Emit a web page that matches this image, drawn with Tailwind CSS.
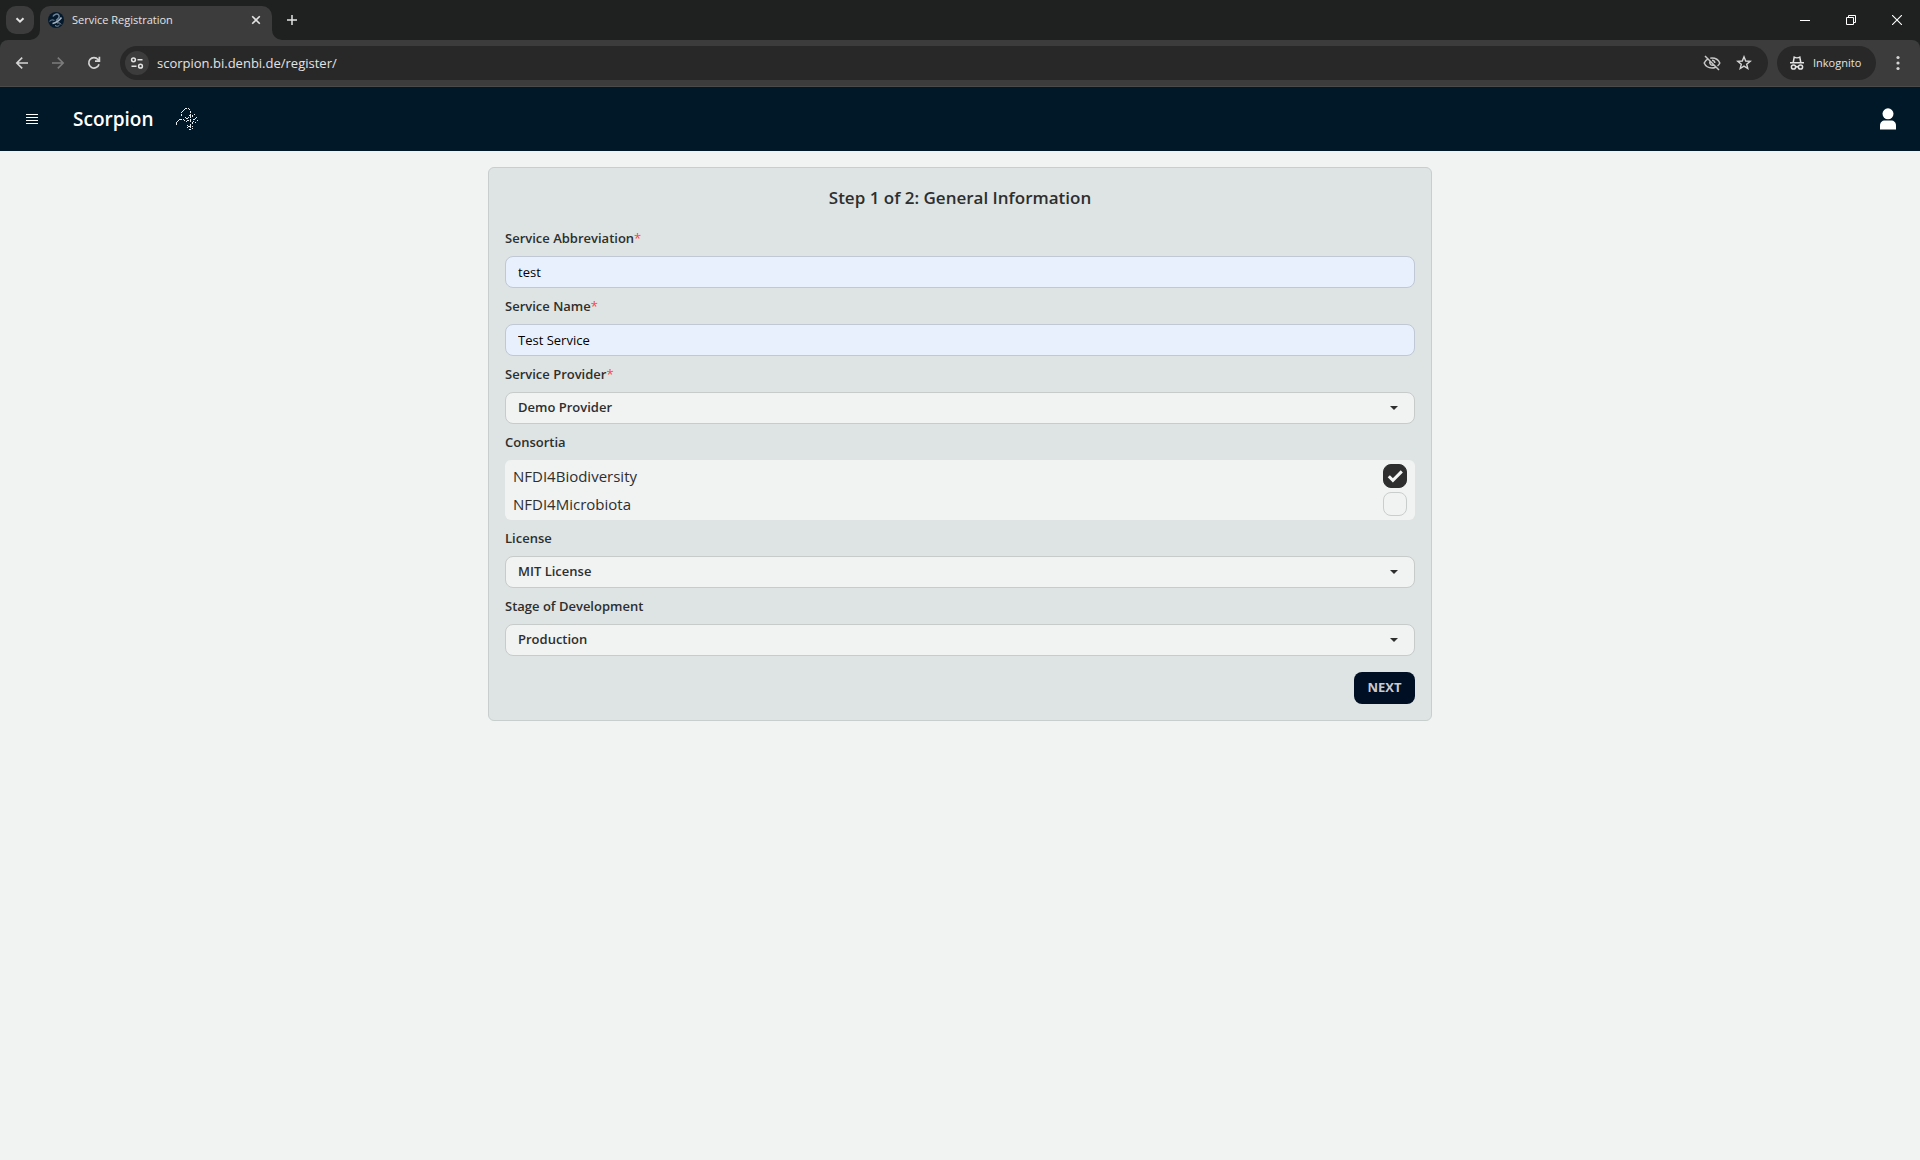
<!DOCTYPE html>
<html lang="en">
<head>
<meta charset="utf-8">
<meta name="viewport" content="width=device-width, initial-scale=1">
<title>Service Registration</title>
<script src="https://cdn.jsdelivr.net/npm/@tailwindcss/browser@4"></script>
</head>
<body class="flex min-h-screen flex-col bg-[#f0f3f2] font-['Open_Sans','Noto_Sans',sans-serif] text-[#2e2e2e]">

<!-- Browser frame -->
<div class="flex flex-col bg-[#1f2120] text-[#e3e3e3]">
  <div class="flex h-10 items-stretch">
    <button aria-label="Search tabs" class="mt-[6px] ml-[6px] flex size-7 items-center justify-center rounded-[10px] bg-[#3c3c3c]">
      <svg class="size-3" viewBox="0 0 12 12" fill="none" stroke="currentColor" stroke-width="2"><path d="M2.500 4.200 6 7.600 9.500 4.200"/></svg>
    </button>
    <div class="relative mt-[6px] ml-[6px] flex w-[232px] items-center rounded-t-[10px] bg-[#3c3c3c] pb-[6px] pl-2 pr-2">
      <svg class="absolute bottom-0 -left-[10px] size-[10px]" viewBox="0 0 10 10" fill="#3c3c3c"><path d="M10 0v10H0A10 10 0 0 0 10 0z"/></svg>
      <svg class="absolute bottom-0 -right-[10px] size-[10px]" viewBox="0 0 10 10" fill="#3c3c3c"><path d="M0 0v10h10A10 10 0 0 1 0 0z"/></svg>
      <svg class="size-4 shrink-0" viewBox="0 0 16 16" fill="none">
        <circle cx="8" cy="8" r="8" fill="#04192b"/>
        <path d="M5 4.500C6 2 9.500 1.200 10.800 3.200c1.200 2-.8 3.800-2.800 5.300" stroke="#6f8599" stroke-width="1.500"/>
        <path d="M1.500 9.500C3 7.500 5 7.500 6.500 8.500" stroke="#5a7188" stroke-width="1.200"/>
        <path d="M4.500 11.500C7.500 11 10.500 9.500 13.500 5.500" stroke="#a5b4c2" stroke-width="1.600"/>
        <path d="M9 11c1.500-.5 3.500 0 4 1.500M7 13.500c1.500 1 3.500 1 4.500-.5" stroke="#8b9dae"/>
      </svg>
      <span class="ml-2 flex-1 text-[11px]">Service Registration</span>
      <button aria-label="Close tab" class="flex size-4 items-center justify-center">
        <svg class="size-[10px]" viewBox="0 0 10 10" stroke="currentColor" stroke-width="1.600"><path d="m1.200 1.200 7.600 7.600M8.800 1.200 1.200 8.800"/></svg>
      </button>
    </div>
    <button aria-label="New tab" class="ml-3 flex w-4 items-center justify-center">
      <svg class="size-3 shrink-0" viewBox="0 0 12 12" stroke="currentColor" stroke-width="1.500"><path d="M6 1v10M1 6h10"/></svg>
    </button>
    <div class="ml-auto flex">
      <button aria-label="Minimize" class="flex w-[46px] items-center justify-center"><svg class="size-[10px]" viewBox="0 0 10 10" stroke="#fff"><path d="M0 5.500h10"/></svg></button>
      <button aria-label="Restore" class="flex w-[46px] items-center justify-center"><svg class="size-[10px]" viewBox="0 0 10 10" fill="none" stroke="#fff"><path d="M.5 2.500h7v7h-7zM2.500 2.500v-2h7v7h-2"/></svg></button>
      <button aria-label="Close" class="flex w-[46px] items-center justify-center"><svg class="size-[10px]" viewBox="0 0 10 10" stroke="#fff" stroke-width="1.100"><path d="m0 0 10 10M10 0 0 10"/></svg></button>
    </div>
  </div>
  <div class="flex h-[47px] items-center rounded-t-lg border-b border-[#4a4a4a] bg-[#3c3c3c] px-3">
    <button aria-label="Back" class="flex size-5 items-center justify-center"><svg class="size-[14px]" viewBox="0 0 14 14" fill="none" stroke="#d5d5d5" stroke-width="1.600"><path d="M13 7H2M7.200 1.600 1.800 7l5.400 5.400"/></svg></button>
    <button aria-label="Forward" disabled class="ml-4 flex size-5 items-center justify-center"><svg class="size-[14px]" viewBox="0 0 14 14" fill="none" stroke="#7c7c7c" stroke-width="1.600"><path d="M1 7h11M6.800 1.600 12.200 7l-5.400 5.400"/></svg></button>
    <button aria-label="Reload" class="ml-4 flex size-5 items-center justify-center"><svg class="size-[14px]" viewBox="0 0 14 14" fill="none" stroke="#d5d5d5" stroke-width="1.700"><path d="M12 8.200A5.200 5.200 0 1 1 11 3.500L12.500 5M12.400.8v4.400H8"/></svg></button>
    <div class="ml-4 flex h-[34px] flex-1 items-center rounded-full bg-[#282828] pr-[14px] pl-[5px]">
      <button aria-label="Site information" class="flex size-6 items-center justify-center rounded-full bg-[#3c3c3c]">
        <svg class="size-[14px]" viewBox="0 0 14 14" fill="none" stroke="#e3e3e3" stroke-width="1.500"><circle cx="3.500" cy="3.800" r="1.900"/><path d="M7.500 3.800h5M1.500 10.200h5"/><circle cx="10.500" cy="10.200" r="1.900"/></svg>
      </button>
      <input aria-label="Address" type="text" value="scorpion.bi.denbi.de/register/" class="ml-2 h-6 flex-1 bg-transparent text-[13px] text-[#e3e3e3] outline-none">
      <button aria-label="Third-party cookies blocked" class="flex size-5 items-center justify-center"><svg class="size-[18px]" viewBox="0 0 18 18" fill="none" stroke="#c7c7c7" stroke-width="1.500"><path d="M5.500 4.700C3.700 5.600 2 7.200 1.200 9c1.300 3 4.400 5 7.800 5 1.300 0 2.500-.3 3.600-.8M7.300 4.200C8 4 8.500 4 9 4c3.400 0 6.500 2 7.800 5-.5 1.200-1.300 2.200-2.300 3M2 2l14 14M7 7.300A2.800 2.800 0 0 0 10.700 11M9 6.200A2.800 2.800 0 0 1 11.800 9"/></svg></button>
      <button aria-label="Bookmark this tab" class="ml-3 flex size-5 items-center justify-center"><svg class="size-4" viewBox="0 0 16 16" fill="none" stroke="#d5d5d5" stroke-width="1.400"><path d="m8 1.800 1.700 4.200 4.500.3-3.500 2.900 1.100 4.400L8 11.200l-3.800 2.400 1.100-4.400L1.800 6.300 6.300 6z"/></svg></button>
    </div>
    <button class="ml-[9px] flex h-[34px] w-[99px] items-center gap-2 rounded-full bg-[#282828] pl-3 text-[11px]">
      <svg class="size-4 shrink-0" viewBox="0 0 16 16" fill="none" stroke="#e3e3e3" stroke-width="1.500"><path d="M1 7.800h14M4.200 7.500 5.200 2.200c1.200.6 4.400.6 5.600 0l1 5.300M6.800 12c.8-.5 1.600-.5 2.400 0"/><circle cx="4.500" cy="12" r="2.100"/><circle cx="11.500" cy="12" r="2.100"/></svg>
      <span>Inkognito</span>
    </button>
    <button aria-label="Browser menu" class="ml-3 flex size-5 items-center justify-center"><svg class="h-4 w-4" viewBox="0 0 16 16" fill="#d5d5d5"><circle cx="8" cy="2.500" r="1.600"/><circle cx="8" cy="8" r="1.600"/><circle cx="8" cy="13.500" r="1.600"/></svg></button>
  </div>
</div>

<!-- Site header -->
<header class="flex h-16 items-center bg-[#011828] px-2 text-white">
  <button aria-label="Open menu" class="flex size-12 items-center justify-center"><svg class="size-3" viewBox="0 0 12 12" stroke="#fff"><path d="M0 1.500h12M0 4.500h12M0 7.500h12M0 10.500h12"/></svg></button>
  <a href="#" class="ml-[17px] flex items-center text-[19px] font-semibold">Scorpion
    <svg class="ml-[22px] size-6" viewBox="0 0 24 24" fill="none" stroke="#e6ebee" shape-rendering="crispEdges">
      <path d="M6.500 9V7M6.500 6V5M7 4.500h1M8 3.500h1M9 2.500h1M10 1.500h2M13 1.500h1M14 2.500h1M15.500 4v1.500"/>
      <path d="M1.500 18v-3M2 14.500h1M3 13.500h1M4 12.500h3M8 12.500h1M9 13.500h1"/>
      <path d="M15.500 7v4M15.500 12v3M17.500 8v2M19.500 7v1M11 11.500h2M10 10.500h1M13 10.500h1M12 13.500h2M11 14.500h1M14 8.500h1M18 12.500h2M18 14.500h1M20 11.500h1M22 13.500h1M21 10.500h1M20 15.500h1M17.500 15v2M15.500 17v4M13 19.500h2M12 20.500h1M17 19.500h1M14 22.500h2M12 18.500h1M17 21.500h1" />
    </svg>
  </a>
  <button aria-label="Account" class="ml-auto flex size-12 items-center justify-center"><svg class="size-6" viewBox="0 0 24 24" fill="#fff"><circle cx="12" cy="6.800" r="5.500"/><path d="M4 22.500v-4c0-3 2-5 5-5h6c3 0 5 2 5 5v4z"/></svg></button>
</header>

<!-- Registration form -->
<main class="mx-auto w-1/2 px-2 py-4">
  <form class="rounded-md border border-[#c8cecd] bg-[#dde4e3] p-4" onsubmit="return false">
    <h1 class="mb-2 text-center text-[17px] leading-7 font-semibold">Step 1 of 2: General Information</h1>

    <label for="abbr" class="block py-2 text-[13px] leading-5 font-semibold">Service Abbreviation<span class="font-normal text-[#ff4545]">*</span></label>
    <input id="abbr" type="text" value="test" class="block h-8 w-full rounded-lg border border-[#c0c7d5] bg-[#e8f0fe] px-3 text-[13px] text-black">

    <label for="name" class="block py-2 text-[13px] leading-5 font-semibold">Service Name<span class="font-normal text-[#ff4545]">*</span></label>
    <input id="name" type="text" value="Test Service" class="block h-8 w-full rounded-lg border border-[#c0c7d5] bg-[#e8f0fe] px-3 text-[13px] text-black">

    <label for="provider" class="block py-2 text-[13px] leading-5 font-semibold">Service Provider<span class="font-normal text-[#ff4545]">*</span></label>
    <div class="relative">
      <select id="provider" class="block h-8 w-full appearance-none rounded-lg border border-[#c7cbca] bg-[#f0f3f2] px-3 text-[13px] font-semibold"><option>Demo Provider</option></select>
      <svg class="pointer-events-none absolute top-[14px] right-[17px] h-1 w-2" viewBox="0 0 8 4" fill="#2e2e2e"><path d="M0 0h8L4 4z"/></svg>
    </div>

    <fieldset>
      <legend class="block py-2 text-[13px] leading-5 font-semibold">Consortia</legend>
      <div class="flex flex-col gap-1 rounded-md bg-[#f0f3f2] px-2 py-1 text-[15px]">
        <label class="flex h-6 items-center justify-between">NFDI4Biodiversity
          <span class="relative size-6">
            <input type="checkbox" checked class="peer block size-6 appearance-none rounded-lg border border-[#c9cdcc] checked:border-[#2e2e2e] checked:bg-[#2e2e2e]">
            <svg class="pointer-events-none absolute inset-0 hidden size-6 peer-checked:block" viewBox="0 0 24 24" fill="none" stroke="#f5f7f6" stroke-width="3"><path d="m5.800 12.200 4.100 4.200 8.900-9"/></svg>
          </span>
        </label>
        <label class="flex h-6 items-center justify-between">NFDI4Microbiota
          <span class="relative size-6">
            <input type="checkbox" class="peer block size-6 appearance-none rounded-lg border border-[#c9cdcc] checked:border-[#2e2e2e] checked:bg-[#2e2e2e]">
            <svg class="pointer-events-none absolute inset-0 hidden size-6 peer-checked:block" viewBox="0 0 24 24" fill="none" stroke="#f5f7f6" stroke-width="3"><path d="m5.800 12.200 4.100 4.200 8.900-9"/></svg>
          </span>
        </label>
      </div>
    </fieldset>

    <label for="license" class="block py-2 text-[13px] leading-5 font-semibold">License</label>
    <div class="relative">
      <select id="license" class="block h-8 w-full appearance-none rounded-lg border border-[#c7cbca] bg-[#f0f3f2] px-3 text-[13px] font-semibold"><option>MIT License</option></select>
      <svg class="pointer-events-none absolute top-[14px] right-[17px] h-1 w-2" viewBox="0 0 8 4" fill="#2e2e2e"><path d="M0 0h8L4 4z"/></svg>
    </div>

    <label for="stage" class="block py-2 text-[13px] leading-5 font-semibold">Stage of Development</label>
    <div class="relative">
      <select id="stage" class="block h-8 w-full appearance-none rounded-lg border border-[#c7cbca] bg-[#f0f3f2] px-3 text-[13px] font-semibold"><option>Production</option></select>
      <svg class="pointer-events-none absolute top-[14px] right-[17px] h-1 w-2" viewBox="0 0 8 4" fill="#2e2e2e"><path d="M0 0h8L4 4z"/></svg>
    </div>

    <div class="mt-4 flex justify-end">
      <button type="submit" class="flex h-8 w-[61px] items-center justify-center rounded-lg bg-[#000f24] text-[13px] font-bold text-[#c9cbd0]">NEXT</button>
    </div>
  </form>
</main>
</body>
</html>
